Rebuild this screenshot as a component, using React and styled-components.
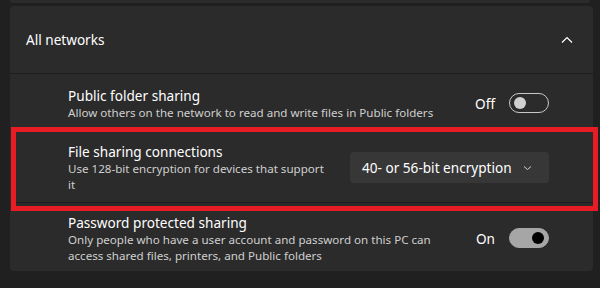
import React from "react";
import styled, { createGlobalStyle } from "styled-components";

const GlobalStyle = createGlobalStyle`
  html, body {
    margin: 0;
    padding: 0;
    background: #202020;
    font-family: "Segoe UI", "Noto Sans", sans-serif;
    color: #ffffff;
  }
`;

const Page = styled.div`
  position: relative;
  width: 600px;
  height: 288px;
  overflow: hidden;
  background: #202020;
  display: flex;
  flex-direction: column;
  gap: 3px;
`;

const PrevCard = styled.div`
  height: 3px;
  margin: 0 10px 0 10px;
  background: #2b2b2b;
  border-radius: 0 0 4px 4px;
`;

const Card = styled.section`
  margin: 0 7px 0 10px;
  background: #2b2b2b;
  border-radius: 4px;
  display: flex;
  flex-direction: column;
`;

const Header = styled.div`
  height: 67px;
  padding: 0 20px 0 16px;
  display: flex;
  align-items: center;
  justify-content: space-between;
  border-bottom: 1px solid #1d1d1d;
  font-size: 13.6px;
`;

const Row = styled.div`
  height: ${(p) => p.$h}px;
  padding: 2px 44px 0 58px;
  box-sizing: border-box;
  display: flex;
  align-items: center;
  justify-content: space-between;
  border-bottom: ${(p) => (p.$last ? "none" : "1px solid #1d1d1d")};
`;

const Text = styled.div`
  display: flex;
  flex-direction: column;
  max-width: ${(p) => p.$w}px;
`;

const Title = styled.div`
  font-size: 13.6px;
  line-height: 19px;
  color: #ffffff;
`;

const Sub = styled.div`
  font-size: 11.6px;
  line-height: 16px;
  color: #cfcfcf;
`;

const Control = styled.div`
  display: flex;
  align-items: center;
  gap: 14px;
  font-size: 13.6px;
`;

const Toggle = styled.div`
  width: 40px;
  height: 20px;
  box-sizing: border-box;
  border-radius: 10px;
  border: 1px solid ${(p) => (p.$on ? "#a6a6a6" : "#c8c8c8")};
  background: ${(p) => (p.$on ? "#a6a6a6" : "transparent")};
  display: flex;
  align-items: center;
  justify-content: ${(p) => (p.$on ? "flex-end" : "flex-start")};
  padding: 0 4px;
`;

const Knob = styled.div`
  width: 12px;
  height: 12px;
  border-radius: 50%;
  background: ${(p) => (p.$on ? "#000000" : "#d0d0d0")};
`;

const Select = styled.div`
  width: 199px;
  height: 31px;
  box-sizing: border-box;
  background: #373737;
  border-radius: 4px;
  display: flex;
  align-items: center;
  justify-content: space-between;
  padding: 0 17px 0 12px;
  font-size: 13.6px;
`;

const Highlight = styled.div`
  position: absolute;
  left: 11px;
  top: 127px;
  width: 587px;
  height: 84px;
  box-sizing: border-box;
  border: 5px solid #e81c24;
  pointer-events: none;
`;

const ChevronUp = () => (
  <svg width="12" height="8" viewBox="0 0 12 8">
    <path d="M1 6.5 L6 1.5 L11 6.5" fill="none" stroke="#ffffff" strokeWidth="1.2" />
  </svg>
);

const ChevronDown = () => (
  <svg width="9" height="6" viewBox="0 0 9 6">
    <path d="M1 1.5 L4.5 4.5 L8 1.5" fill="none" stroke="#cfcfcf" strokeWidth="1" />
  </svg>
);

const App = () => {
  return (
    <>
      <GlobalStyle />
      <Page>
        <PrevCard />
        <Card>
          <Header>
            <span>All networks</span>
            <ChevronUp />
          </Header>
          <Row $h={57}>
            <Text $w={380}>
              <Title>Public folder sharing</Title>
              <Sub>Allow others on the network to read and write files in Public folders</Sub>
            </Text>
            <Control>
              <span>Off</span>
              <Toggle>
                <Knob />
              </Toggle>
            </Control>
          </Row>
          <Row $h={72}>
            <Text $w={262}>
              <Title>File sharing connections</Title>
              <Sub>Use 128-bit encryption for devices that support it</Sub>
            </Text>
            <Select>
              <span>40- or 56-bit encryption</span>
              <ChevronDown />
            </Select>
          </Row>
          <Row $h={68} $last>
            <Text $w={370}>
              <Title>Password protected sharing</Title>
              <Sub>
                Only people who have a user account and password on this PC can access shared
                files, printers, and Public folders
              </Sub>
            </Text>
            <Control>
              <span>On</span>
              <Toggle $on>
                <Knob $on />
              </Toggle>
            </Control>
          </Row>
        </Card>
        <Highlight />
      </Page>
    </>
  );
};

export default App;
